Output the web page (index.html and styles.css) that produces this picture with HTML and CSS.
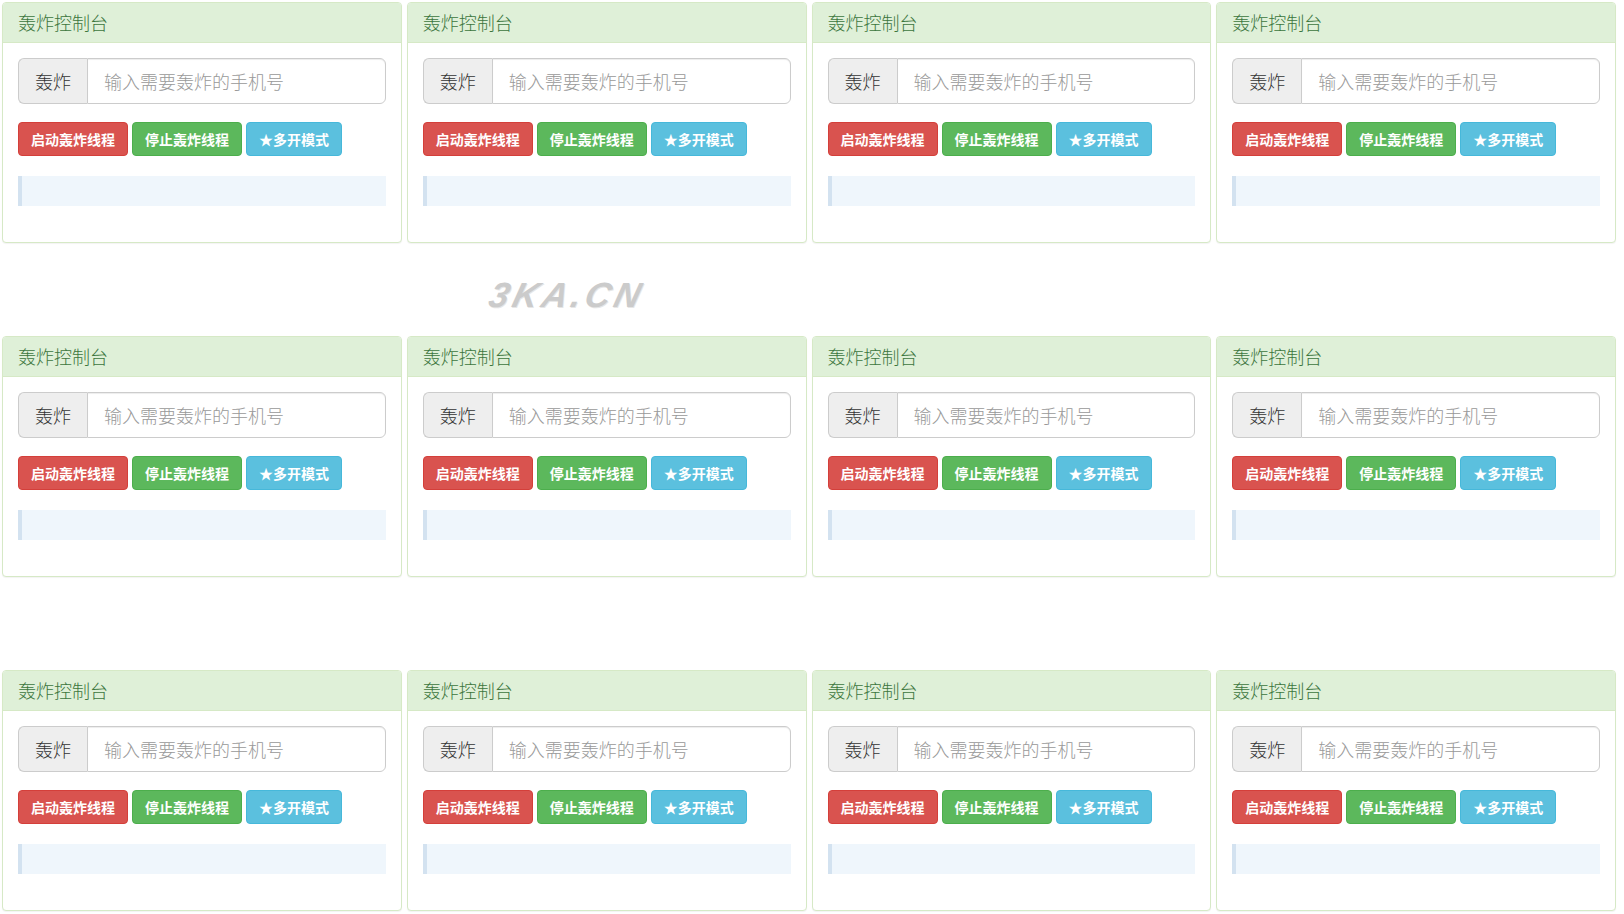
FILE: index.html
```html
<!DOCTYPE html>
<html lang="zh-CN">
<head>
  <meta charset="UTF-8">
  <meta name="viewport" content="width=device-width, initial-scale=1.0">
  <title>轰炸控制台</title>
  <link rel="stylesheet" href="styles.css">
</head>
<body>
  <div class="wrap">
    <div class="panel">
      <div class="panel-heading">轰炸控制台</div>
      <div class="panel-body">
        <div class="input-group">
          <span class="addon">轰炸</span>
          <input type="text" placeholder="输入需要轰炸的手机号">
        </div>
        <div class="btns">
          <button class="btn btn-danger">启动轰炸线程</button>
          <button class="btn btn-success">停止轰炸线程</button>
          <button class="btn btn-info">★多开模式</button>
        </div>
        <div class="log"></div>
      </div>
    </div>
    <div class="panel">
      <div class="panel-heading">轰炸控制台</div>
      <div class="panel-body">
        <div class="input-group">
          <span class="addon">轰炸</span>
          <input type="text" placeholder="输入需要轰炸的手机号">
        </div>
        <div class="btns">
          <button class="btn btn-danger">启动轰炸线程</button>
          <button class="btn btn-success">停止轰炸线程</button>
          <button class="btn btn-info">★多开模式</button>
        </div>
        <div class="log"></div>
      </div>
    </div>
    <div class="panel">
      <div class="panel-heading">轰炸控制台</div>
      <div class="panel-body">
        <div class="input-group">
          <span class="addon">轰炸</span>
          <input type="text" placeholder="输入需要轰炸的手机号">
        </div>
        <div class="btns">
          <button class="btn btn-danger">启动轰炸线程</button>
          <button class="btn btn-success">停止轰炸线程</button>
          <button class="btn btn-info">★多开模式</button>
        </div>
        <div class="log"></div>
      </div>
    </div>
    <div class="panel">
      <div class="panel-heading">轰炸控制台</div>
      <div class="panel-body">
        <div class="input-group">
          <span class="addon">轰炸</span>
          <input type="text" placeholder="输入需要轰炸的手机号">
        </div>
        <div class="btns">
          <button class="btn btn-danger">启动轰炸线程</button>
          <button class="btn btn-success">停止轰炸线程</button>
          <button class="btn btn-info">★多开模式</button>
        </div>
        <div class="log"></div>
      </div>
    </div>

    <div class="panel">
      <div class="panel-heading">轰炸控制台</div>
      <div class="panel-body">
        <div class="input-group">
          <span class="addon">轰炸</span>
          <input type="text" placeholder="输入需要轰炸的手机号">
        </div>
        <div class="btns">
          <button class="btn btn-danger">启动轰炸线程</button>
          <button class="btn btn-success">停止轰炸线程</button>
          <button class="btn btn-info">★多开模式</button>
        </div>
        <div class="log"></div>
      </div>
    </div>
    <div class="panel">
      <div class="panel-heading">轰炸控制台</div>
      <div class="panel-body">
        <div class="input-group">
          <span class="addon">轰炸</span>
          <input type="text" placeholder="输入需要轰炸的手机号">
        </div>
        <div class="btns">
          <button class="btn btn-danger">启动轰炸线程</button>
          <button class="btn btn-success">停止轰炸线程</button>
          <button class="btn btn-info">★多开模式</button>
        </div>
        <div class="log"></div>
      </div>
    </div>
    <div class="panel">
      <div class="panel-heading">轰炸控制台</div>
      <div class="panel-body">
        <div class="input-group">
          <span class="addon">轰炸</span>
          <input type="text" placeholder="输入需要轰炸的手机号">
        </div>
        <div class="btns">
          <button class="btn btn-danger">启动轰炸线程</button>
          <button class="btn btn-success">停止轰炸线程</button>
          <button class="btn btn-info">★多开模式</button>
        </div>
        <div class="log"></div>
      </div>
    </div>
    <div class="panel">
      <div class="panel-heading">轰炸控制台</div>
      <div class="panel-body">
        <div class="input-group">
          <span class="addon">轰炸</span>
          <input type="text" placeholder="输入需要轰炸的手机号">
        </div>
        <div class="btns">
          <button class="btn btn-danger">启动轰炸线程</button>
          <button class="btn btn-success">停止轰炸线程</button>
          <button class="btn btn-info">★多开模式</button>
        </div>
        <div class="log"></div>
      </div>
    </div>

    <div class="panel">
      <div class="panel-heading">轰炸控制台</div>
      <div class="panel-body">
        <div class="input-group">
          <span class="addon">轰炸</span>
          <input type="text" placeholder="输入需要轰炸的手机号">
        </div>
        <div class="btns">
          <button class="btn btn-danger">启动轰炸线程</button>
          <button class="btn btn-success">停止轰炸线程</button>
          <button class="btn btn-info">★多开模式</button>
        </div>
        <div class="log"></div>
      </div>
    </div>
    <div class="panel">
      <div class="panel-heading">轰炸控制台</div>
      <div class="panel-body">
        <div class="input-group">
          <span class="addon">轰炸</span>
          <input type="text" placeholder="输入需要轰炸的手机号">
        </div>
        <div class="btns">
          <button class="btn btn-danger">启动轰炸线程</button>
          <button class="btn btn-success">停止轰炸线程</button>
          <button class="btn btn-info">★多开模式</button>
        </div>
        <div class="log"></div>
      </div>
    </div>
    <div class="panel">
      <div class="panel-heading">轰炸控制台</div>
      <div class="panel-body">
        <div class="input-group">
          <span class="addon">轰炸</span>
          <input type="text" placeholder="输入需要轰炸的手机号">
        </div>
        <div class="btns">
          <button class="btn btn-danger">启动轰炸线程</button>
          <button class="btn btn-success">停止轰炸线程</button>
          <button class="btn btn-info">★多开模式</button>
        </div>
        <div class="log"></div>
      </div>
    </div>
    <div class="panel">
      <div class="panel-heading">轰炸控制台</div>
      <div class="panel-body">
        <div class="input-group">
          <span class="addon">轰炸</span>
          <input type="text" placeholder="输入需要轰炸的手机号">
        </div>
        <div class="btns">
          <button class="btn btn-danger">启动轰炸线程</button>
          <button class="btn btn-success">停止轰炸线程</button>
          <button class="btn btn-info">★多开模式</button>
        </div>
        <div class="log"></div>
      </div>
    </div>
  </div>

  <!-- 水印 -->
  <div class="watermark">3KA.CN</div>
</body>
</html>
```

FILE: styles.css
```css
* {
  box-sizing: border-box;
}

body {
  margin: 0;
  background: #fff;
  font-family: "Noto Sans CJK SC", "Liberation Sans", sans-serif;
  font-size: 14px;
  color: #333;
  position: relative;
  min-height: 100vh;
}

.wrap {
  display: grid;
  grid-template-columns: repeat(4, 1fr);
  column-gap: 5px;
  row-gap: 93px;
  padding: 2px 8px 0 2px;
}

.panel {
  background: #fff;
  border: 1px solid #d6e9c6;
  border-radius: 4px;
  box-shadow: 0 1px 1px rgba(0,0,0,0.05);
}

.panel-heading {
  background: #dff0d8;
  color: #3c763d;
  border-bottom: 1px solid #d6e9c6;
  border-radius: 3px 3px 0 0;
  padding: 10px 15px;
  font-size: 18px;
  font-weight: 300;
  line-height: 19px;
}

.panel-body {
  padding: 15px;
}

.input-group {
  display: flex;
  height: 46px;
}

.addon {
  padding: 10px 16px;
  font-size: 18px;
  font-weight: 300;
  line-height: 24px;
  color: #333;
  background: #eee;
  border: 1px solid #ccc;
  border-right: 0;
  border-radius: 6px 0 0 6px;
}

.input-group input {
  flex: 1;
  min-width: 0;
  height: 46px;
  padding: 10px 16px;
  font-family: inherit;
  font-size: 18px;
  font-weight: 300;
  color: #555;
  border: 1px solid #ccc;
  border-radius: 0 6px 6px 0;
  box-shadow: inset 0 1px 1px rgba(0,0,0,0.075);
  outline: none;
}

.input-group input::placeholder {
  color: #999;
}

.btns {
  display: flex;
  gap: 4px;
  margin-top: 18px;
}

.btn {
  padding: 6px 12px;
  font-family: inherit;
  font-size: 14px;
  font-weight: bold;
  line-height: 20px;
  color: #fff;
  border: 1px solid transparent;
  border-radius: 4px;
  cursor: pointer;
}

.btn-danger {
  background: #d9534f;
  border-color: #d43f3a;
}

.btn-success {
  background: #5cb85c;
  border-color: #4cae4c;
}

.btn-info {
  background: #5bc0de;
  border-color: #46b8da;
}

.log {
  height: 30px;
  margin: 20px 0 21px;
  background: #eff6fc;
  border-left: 4px solid #d3e2f0;
}

.watermark {
  position: absolute;
  left: 490px;
  top: 275px;
  font-family: "Liberation Sans", sans-serif;
  font-size: 35px;
  font-weight: bold;
  font-style: italic;
  letter-spacing: 4px;
  color: #cbcbcb;
  transform: skewX(-14deg);
  text-shadow: 1px 1px 0 #e6e6e6;
}
```
